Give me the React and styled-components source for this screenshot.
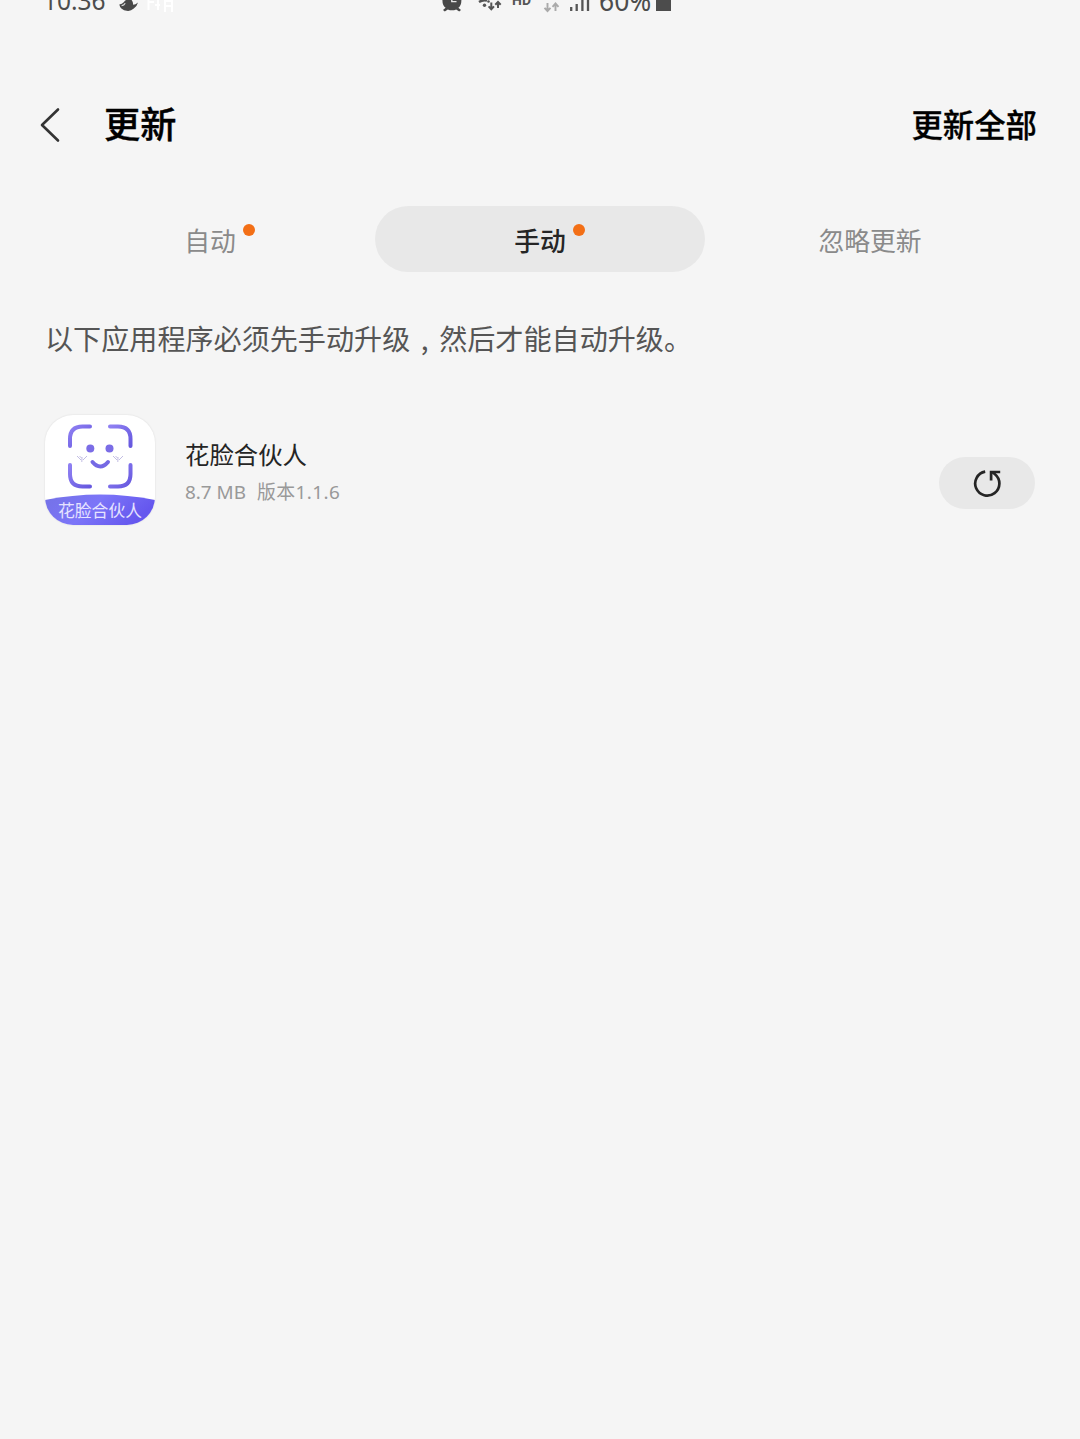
import React from "react";
import styled, { createGlobalStyle } from "styled-components";

const tabs = [
    { label: "自动", dot: true },
    { label: "手动", dot: true, active: true },
    { label: "忽略更新" },
];

function StatusBar() {
    return (
        <Status>
            <Clock>10:36</Clock>
            <StatusIcon $gap={13} width="20" height="14" viewBox="0 0 20 14">
                <path
                    d="M0.3 4.4Q3 4.2 5 2Q7 -1 11 -1Q14 0 14.2 4.8Q16.5 4.8 19 2.6Q18 6.4 14.8 8.6Q12 11 9 10.9Q4.4 10.6 2.4 8.4Q0.8 7 0.3 4.4Z"
                    fill="#484848"
                />
                <path d="M2.6 5.6Q5 5.4 6.2 3.2" stroke="#ddd" strokeWidth="1.2" fill="none" />
            </StatusIcon>
            <StatusIcon $gap={8} width="28" height="14" viewBox="0 0 28 14">
                <path
                    d="M1.5 0V10M1 2H7M8 5H13M17 1H26M17 6H26M18 1V12M25 1V12M11 0V10"
                    stroke="#fff"
                    strokeWidth="2"
                    fill="none"
                />
            </StatusIcon>
            <StatusIcon $gap={266} width="22" height="14" viewBox="0 0 22 14">
                <path d="M1.4 0H20.4Q20.4 5.4 17.4 7.8L20 10.1L18.2 11.6L15.2 9.4Q11 11.3 6.8 9.4L3.8 11.6L2 10.1L4.6 7.8Q1.4 5.4 1.4 0Z" fill="#484848" />
                <path d="M10.8 0V1.6H15.5" stroke="#e5e5e5" strokeWidth="1.4" fill="none" />
            </StatusIcon>
            <StatusIcon $gap={15} width="24" height="14" viewBox="0 0 24 14">
                <path d="M1 2Q5 -0.6 9 0.6" stroke="#555" strokeWidth="2.4" fill="none" />
                <circle cx="6.5" cy="5.3" r="1.7" fill="#555" />
                <circle cx="10.5" cy="1.5" r="1.3" fill="#555" />
                <path
                    d="M13.3 2.5V9M10.6 6.4L13.3 9.2L16 6.4M20 8V2M17.3 4.7L20 2L22.7 4.7"
                    stroke="#555"
                    strokeWidth="2"
                    fill="none"
                />
            </StatusIcon>
            <HdText>HD</HdText>
            <StatusIcon $gap={11} width="18" height="14" viewBox="0 0 18 14">
                <path
                    d="M4.5 3V11M1.5 7.8L4.5 11L7.5 7.8M12.5 11V3.6M9.5 6.8L12.5 3.5L15.5 6.8"
                    stroke="#aaa"
                    strokeWidth="1.9"
                    fill="none"
                />
            </StatusIcon>
            <StatusIcon $gap={8} width="22" height="14" viewBox="0 0 22 14">
                <path d="M2.2 7V11M7.7 4V11M13.4 0V11M19 0V11" stroke="#555" strokeWidth="2.3" />
            </StatusIcon>
            <Percent>60%</Percent>
            <Battery />
        </Status>
    );
}

function AppLogo() {
    return (
        <Logo>
            <svg width="110" height="110" viewBox="0 0 110 110">
                <defs>
                    <linearGradient id="band" x1="0" y1="0" x2="1" y2="0.3">
                        <stop offset="0" stopColor="#7472e6" />
                        <stop offset="0.5" stopColor="#7c75f8" />
                        <stop offset="1" stopColor="#6557ee" />
                    </linearGradient>
                    <linearGradient id="frame" x1="0" y1="0" x2="1" y2="1">
                        <stop offset="0" stopColor="#8f80f2" />
                        <stop offset="1" stopColor="#6658df" />
                    </linearGradient>
                </defs>
                <path d="M0 85Q55 74 110 85V110H0Z" fill="url(#band)" />
                <g fill="none" stroke="url(#frame)" strokeWidth="4" strokeLinecap="round">
                    <path d="M25 31V24Q25 11.5 37.5 11.5H45" />
                    <path d="M65 11.5H73Q85.5 11.5 85.5 24V31" />
                    <path d="M25 50V59Q25 71.5 37.5 71.5H45" />
                    <path d="M65 71.5H73Q85.5 71.5 85.5 59V50" />
                    <path d="M47.5 47Q55.3 56 63 47" stroke="#7569e4" />
                </g>
                <circle cx="45.3" cy="33.5" r="4" fill="#7b6de6" />
                <circle cx="64.5" cy="33.5" r="4" fill="#7b6de6" />
                <path
                    d="M32 41L36 45M34.5 41L36.5 43M36.8 47L37 42M42 41L38 45M68 41L72 45M70.5 41L72.5 43M72.8 47L73 42M78 41L74 45"
                    stroke="#bbb6e0"
                    strokeWidth="0.9"
                    fill="none"
                />
            </svg>
            <LogoText>花脸合伙人</LogoText>
        </Logo>
    );
}

function App() {
    return (
        <Page>
            <GlobalStyle />
            <StatusBar />
            <Header>
                <BackIcon width="22" height="36" viewBox="0 0 22 36">
                    <path d="M19 2.5L3 18L19 33.5" />
                </BackIcon>
                <Title>更新</Title>
                <UpdateAll>更新全部</UpdateAll>
            </Header>
            <Tabs>
                {tabs.map((tab) => (
                    <Tab key={tab.label} $active={tab.active}>
                        <TabLabel>
                            {tab.label}
                            {tab.dot && <Dot />}
                        </TabLabel>
                    </Tab>
                ))}
            </Tabs>
            <Notice>
                以下应用程序必须先手动升级<Comma>,</Comma>然后才能自动升级。
            </Notice>
            <AppRow>
                <AppLogo />
                <AppInfo>
                    <AppName>花脸合伙人</AppName>
                    <AppMeta>
                        <span>8.7 MB</span>
                        <Version>版本1.1.6</Version>
                    </AppMeta>
                </AppInfo>
                <UpdateButton>
                    <svg width="30" height="30" viewBox="0 0 30 30">
                        <path d="M13.2 3.6A12.1 12.1 0 1 0 23 6.2L20 4" />
                        <path d="M19.1 12.6V4H28.2" />
                    </svg>
                </UpdateButton>
            </AppRow>
        </Page>
    );
}

export default App;

const GlobalStyle = createGlobalStyle`
    body {
        margin: 0;
        background: #f5f5f5;
    }

    * {
        box-sizing: border-box;
    }
`;

const Page = styled.div`
    width: 1080px;
    height: 1439px;
    overflow: hidden;
    background: #f5f5f5;
    color: #000;
    font-family: "Noto Sans CJK SC", sans-serif;
`;

const Status = styled.div`
    display: flex;
    align-items: flex-start;
    height: 14px;
    padding-left: 43px;
    overflow: hidden;
`;

const StatusText = styled.span`
    flex: none;
    margin-top: -19px;
    font-family: "Noto Sans", sans-serif;
    line-height: 40px;
    color: #4c4c4c;
`;

const Clock = styled(StatusText)`
    width: 63px;
    font-size: 24.5px;
`;

const Percent = styled(StatusText)`
    width: 54px;
    margin-left: 8px;
    font-size: 26.5px;
`;

const HdText = styled.span`
    flex: none;
    width: 20px;
    margin-top: -9px;
    margin-left: 10px;
    font-family: Roboto, sans-serif;
    font-size: 14px;
    font-weight: 700;
    line-height: 18px;
    color: #555;
`;

const StatusIcon = styled.svg`
    flex: none;
    margin-left: ${(props) => props.$gap}px;
`;

const Battery = styled.span`
    flex: none;
    width: 15px;
    height: 11px;
    margin-left: 3px;
    background: #4c4c4c;
`;

const Header = styled.header`
    display: flex;
    align-items: center;
    height: 60px;
    margin-top: 80px;
    padding: 0 43px 0 39px;
`;

const BackIcon = styled.svg`
    margin-top: 2px;
    fill: none;
    stroke: #333;
    stroke-width: 2.6;
    stroke-linecap: round;
    stroke-linejoin: round;
`;

const Title = styled.h1`
    margin: -5px 0 0 43px;
    font-size: 36.2px;
    font-weight: 500;
    line-height: 56px;
    -webkit-text-stroke: 0.4px #000;
`;

const UpdateAll = styled.div`
    margin-left: auto;
    font-size: 31.4px;
    font-weight: 500;
    line-height: 56px;
    -webkit-text-stroke: 0.3px #000;
`;

const Tabs = styled.nav`
    display: grid;
    grid-template-columns: repeat(3, 330px);
    height: 66px;
    margin: 52px 45px 0;
`;

const Tab = styled.div`
    display: flex;
    align-items: center;
    justify-content: center;
    padding-top: 2px;
    border-radius: 33px;
    font-size: 25.8px;
    background: ${(props) => (props.$active ? "#e8e8e8" : "transparent")};
    color: ${(props) => (props.$active ? "#252525" : "#8a8a8a")};
    font-weight: ${(props) => (props.$active ? 500 : 400)};
`;

const TabLabel = styled.span`
    position: relative;
    line-height: 40px;
`;

const Dot = styled.i`
    position: absolute;
    top: 4px;
    right: -19px;
    width: 12px;
    height: 12px;
    border-radius: 50%;
    background: #f36f16;
`;

const Notice = styled.p`
    margin: 46px 45px 0;
    font-size: 28.1px;
    line-height: 40px;
    color: #555;
`;

const Comma = styled.span`
    display: inline-block;
    width: 1.03em;
    text-align: center;
`;

const AppRow = styled.div`
    display: flex;
    align-items: flex-start;
    margin: 57px 45px 0;
`;

const Logo = styled.div`
    position: relative;
    width: 110px;
    height: 110px;
    overflow: hidden;
    border-radius: 28px;
    background: #fff;
    box-shadow: 0 0 2px rgba(0, 0, 0, 0.12);

    svg {
        display: block;
    }
`;

const LogoText = styled.span`
    position: absolute;
    bottom: 4px;
    left: 0;
    width: 100%;
    text-align: center;
    font-size: 16.8px;
    line-height: 22px;
    color: #e6e3ff;
`;

const AppInfo = styled.div`
    margin: 21px 0 0 30px;
`;

const AppName = styled.div`
    font-size: 24.4px;
    line-height: 36px;
    color: #252525;
`;

const AppMeta = styled.div`
    display: flex;
    gap: 11px;
    margin-top: 2px;
    font-family: "Noto Sans", "Noto Sans CJK SC", sans-serif;
    font-size: 18.9px;
    line-height: 36px;
    color: #999;
`;

const Version = styled.span`
    letter-spacing: 0.4px;
`;

const UpdateButton = styled.button`
    display: flex;
    align-items: center;
    justify-content: center;
    width: 96px;
    height: 52px;
    margin: 42px 0 0 auto;
    padding: 0;
    border: 0;
    border-radius: 26px;
    background: #e8e8e8;

    svg {
        fill: none;
        stroke: #252525;
        stroke-width: 2.7;
    }
`;
